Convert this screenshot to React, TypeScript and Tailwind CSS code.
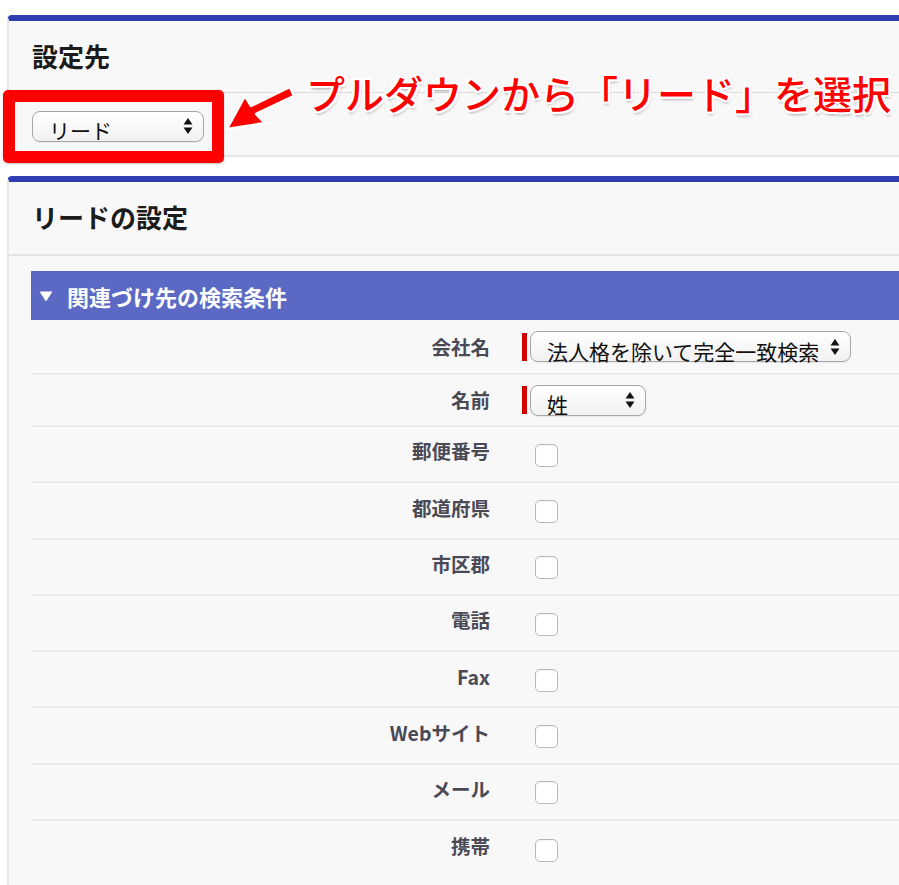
import React from "react";

function Arrows() {
  return (
    <svg width="10" height="18" viewBox="0 0 10 18" className="shrink-0">
      <path d="M5 1 L9.5 7.5 L0.5 7.5 Z" fill="#111" />
      <path d="M0.5 10.5 L9.5 10.5 L5 17 Z" fill="#111" />
    </svg>
  );
}

function FakeSelect({ text, width }: { text: string; width: string }) {
  return (
    <div
      className={`${width} h-[31px] flex items-center justify-between rounded-[8px] border border-[#a6a6a6] bg-gradient-to-b from-[#ffffff] to-[#f1f1f1] pl-[16px] pr-[10px] shadow-[0_1px_1px_rgba(0,0,0,0.06)]`}
    >
      <span className="text-[21px] leading-none text-[#111] pt-[9px] whitespace-nowrap">{text}</span>
      <Arrows />
    </div>
  );
}

function Checkbox() {
  return (
    <div className="w-[23px] h-[23px] rounded-[5px] border border-[#b8b8b8] bg-white shadow-[inset_0_1px_1px_rgba(0,0,0,0.05)]" />
  );
}

const checkRows = ["郵便番号", "都道府県", "市区郡", "電話", "Fax", "Webサイト", "メール", "携帯"];

export default function App() {
  return (
    <div className="relative w-[899px] h-[885px] overflow-hidden bg-white font-['Noto_Sans_CJK_JP','Noto_Sans',sans-serif]">
      <div className="pt-[15px] pl-[7px]">
        {/* Panel 1 */}
        <div className="w-[1000px] rounded-tl-[5px] border-t-[6px] border-t-[#2f3eb3] border-l-2 border-l-[#e6e6e6] border-b-2 border-b-[#e6e6e6] bg-[#f8f8f8]">
          <div className="h-[72px] flex items-center pl-[23px] border-b border-b-[#dcdcdc]">
            <h2 className="text-[26px] leading-none font-bold text-[#1b1b1b] -mt-[2px]">設定先</h2>
          </div>
          <div className="h-[62px] flex items-center pl-[23px] pt-[4px]">
            <FakeSelect text="リード" width="w-[172px]" />
          </div>
        </div>

        {/* Panel 2 */}
        <div className="mt-[19px] w-[1000px] rounded-tl-[5px] border-t-[6px] border-t-[#2f3eb3] border-l-2 border-l-[#e6e6e6] bg-[#f8f8f8] h-[720px]">
          <div className="h-[74px] flex items-center pl-[23px] border-b-2 border-b-[#e3e3e3]">
            <h2 className="text-[26px] leading-none font-bold text-[#1b1b1b] -mt-[2px]">リードの設定</h2>
          </div>
          <div className="pl-[22px] pt-[15px]">
            <div className="h-[49px] bg-[#5c69c4] flex items-center pl-[8px]">
              <svg width="14" height="11" viewBox="0 0 14 11" className="mt-[1px]">
                <path d="M0.5 0.5 L13.5 0.5 L7 10.5 Z" fill="#ffffff" />
              </svg>
              <span className="ml-[14px] text-[22px] leading-none font-bold text-white">関連づけ先の検索条件</span>
            </div>

            {/* 会社名 */}
            <div className="h-[55px] flex items-center border-b-2 border-b-[#ebebeb]">
              <div className="w-[459px] text-right text-[19.5px] font-bold text-[#4a4a56] leading-none">会社名</div>
              <div className="ml-[32px] w-[5px] h-[28px] bg-[#cc0000]" />
              <div className="ml-[3px]">
                <FakeSelect text="法人格を除いて完全一致検索" width="w-[321px]" />
              </div>
            </div>

            {/* 名前 */}
            <div className="h-[52px] flex items-center border-b-2 border-b-[#ebebeb]">
              <div className="w-[459px] text-right text-[19.5px] font-bold text-[#4a4a56] leading-none">名前</div>
              <div className="ml-[32px] w-[5px] h-[28px] bg-[#cc0000]" />
              <div className="ml-[3px]">
                <FakeSelect text="姓" width="w-[116px]" />
              </div>
            </div>

            {checkRows.map((label, i) => (
              <div
                key={label}
                className={`h-[56.3px] flex items-center ${i < checkRows.length - 1 ? "border-b-2 border-b-[#ebebeb]" : ""}`}
              >
                <div className="w-[459px] text-right text-[19.5px] font-bold text-[#4a4a56] leading-none -mt-[6px]">{label}</div>
                <div className="ml-[45px] mt-[2px]">
                  <Checkbox />
                </div>
              </div>
            ))}
          </div>
        </div>
      </div>

      {/* Annotation red box */}
      <div className="absolute left-[3px] top-[90px] w-[221px] h-[73px] border-[12px] border-[#ff0000] rounded-[5px] shadow-[0_1px_2px_rgba(0,0,0,0.25)]" />

      {/* Annotation arrow */}
      <svg className="absolute left-[215px] top-[80px]" width="90" height="60" viewBox="215 80 90 60">
        <path
          d="M227 129 L245 96 L251 106 L290 87 L294 96 L256 114 L265 123 Z"
          fill="#ff0000"
          stroke="#ffffff"
          strokeWidth="2.5"
          strokeLinejoin="round"
        />
      </svg>

      {/* Annotation text */}
      <div className="absolute left-[306px] top-[67px] text-[39px] leading-[50px] font-medium text-[#ff0000] whitespace-nowrap [text-shadow:0_0_2px_#fff,2px_0_0_#fff,-2px_0_0_#fff,0_2px_0_#fff,0_-2px_0_#fff,2px_2px_0_#fff,-2px_-2px_0_#fff,2px_-2px_0_#fff,-2px_2px_0_#fff,1px_3px_3px_rgba(0,0,0,0.35)]">
        プルダウンから「リード」を選択
      </div>
    </div>
  );
}
